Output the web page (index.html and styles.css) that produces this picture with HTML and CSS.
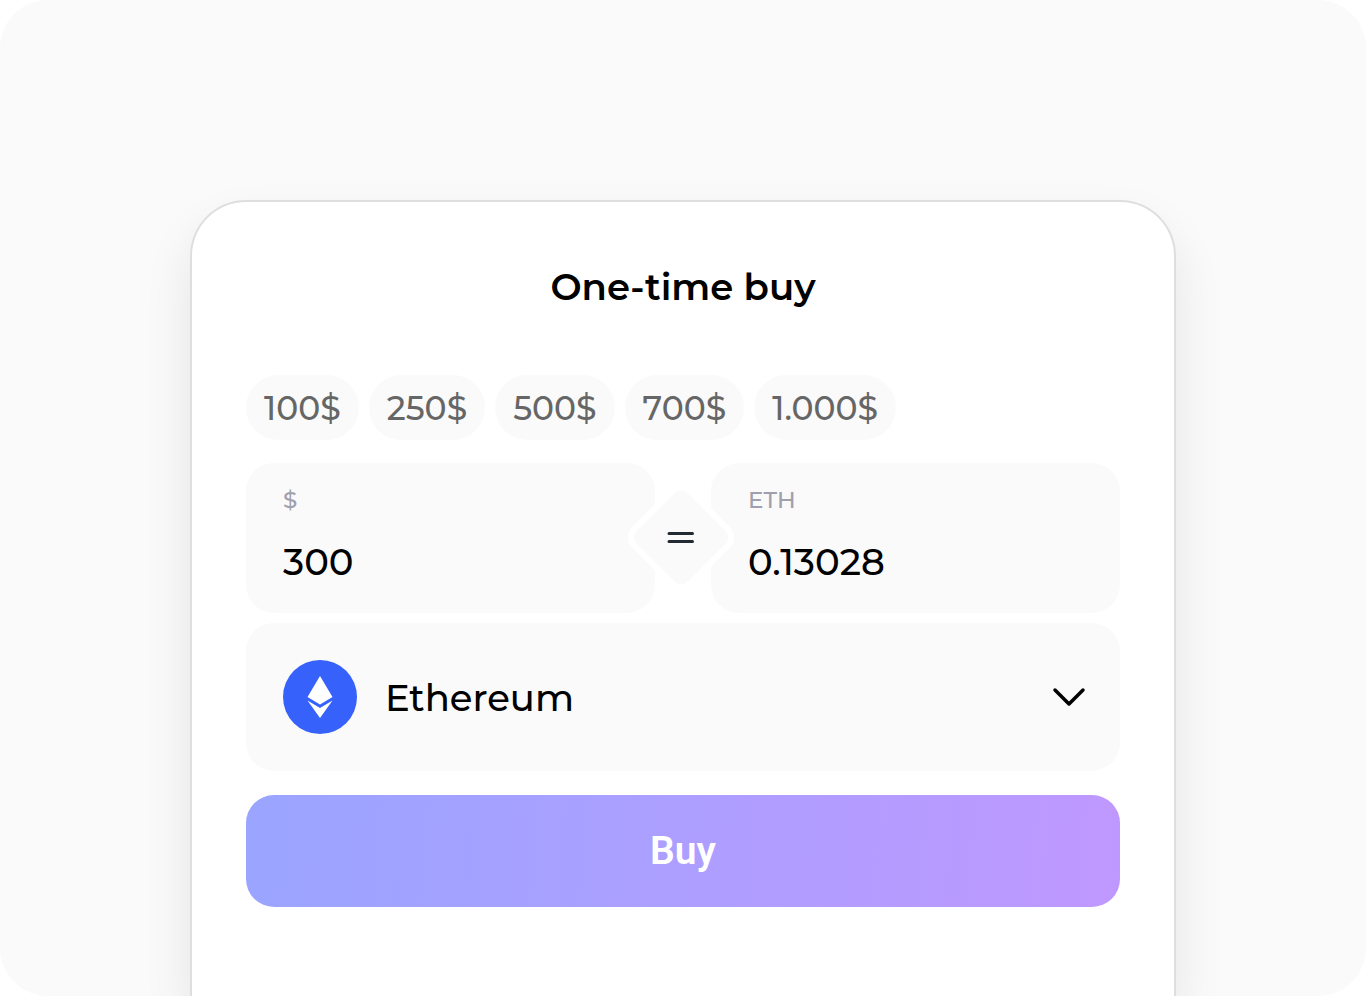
FILE: index.html
```html
<!DOCTYPE html>
<html lang="en">
<head>
    <meta charset="UTF-8">
    <meta name="viewport" content="width=device-width, initial-scale=1.0">
    <title>One-time buy</title>
    <link rel="stylesheet" href="styles.css">
</head>
<body>
    <main class="stage">
        <form class="card">
            <h1 class="title">One-time buy</h1>
            <div class="presets">
                <button type="button" class="preset">100$</button>
                <button type="button" class="preset">250$</button>
                <button type="button" class="preset">500$</button>
                <button type="button" class="preset">700$</button>
                <button type="button" class="preset">1.000$</button>
            </div>
            <div class="amounts">
                <div class="field">
                    <label for="usd">$</label>
                    <input type="text" id="usd" value="300">
                </div>
                <div class="field">
                    <label for="eth">ETH</label>
                    <input type="text" id="eth" value="0.13028">
                </div>
                <svg class="equals" viewBox="0 0 110 110" aria-hidden="true">
                    <rect x="14" y="15.5" width="78" height="78" rx="12" fill="#fafafa" stroke="#fff" stroke-width="6" transform="rotate(45 53 54.5)"/>
                    <path d="M41 50.5h23.500M41 58.500h23.500" stroke="#242a31" stroke-width="3" stroke-linecap="round"/>
                </svg>
            </div>
            <div class="coin">
                <svg class="coin-logo" viewBox="0 0 74 74" aria-hidden="true">
                    <circle cx="37" cy="37" r="37" fill="#3661fb"/>
                    <path d="M37 16l12.500 21L37 44.500 24.500 37z" fill="#fff"/>
                    <path d="M24.500 40.500L37 48l12.500-7.500L37 58z" fill="#fff"/>
                </svg>
                <select class="coin-select" aria-label="Coin">
                    <option>Ethereum</option>
                </select>
                <svg class="chevron" viewBox="0 0 34 20" aria-hidden="true">
                    <path d="M3 3l14 14L31 3" fill="none" stroke="#000" stroke-width="3.500" stroke-linecap="round" stroke-linejoin="round"/>
                </svg>
            </div>
            <button type="submit" class="buy">Buy</button>
        </form>
    </main>
</body>
</html>
```

FILE: styles.css
```css
* {
    box-sizing: border-box;
}
body {
    margin: 0;
    background: #fff;
    font-family: Montserrat, Inter, sans-serif;
    color: #000;
}
button, input, select {
    font-family: inherit;
    border: none;
    margin: 0;
}
.stage {
    display: flex;
    flex-direction: column;
    align-items: center;
    min-height: 100vh;
    padding: 200px 20px 0;
    background: #fafafa;
    border-radius: 48px;
    overflow: hidden;
}
.card {
    flex: 1;
    width: 100%;
    max-width: 986px;
    padding: 61px 54px;
    background: #fff;
    border: 2px solid #dedede;
    border-bottom: none;
    border-radius: 56px 56px 0 0;
    box-shadow: 0 26px 50px rgba(0, 0, 0, 0.09);
}
.title {
    margin: 0 0 64px;
    font-size: 37px;
    line-height: 48px;
    font-weight: 600;
    text-align: center;
}
.presets {
    display: flex;
    flex-wrap: wrap;
    gap: 10px;
    margin-bottom: 23px;
}
.preset {
    height: 65px;
    padding: 0 18px;
    border-radius: 33px;
    background: #fafafa;
    color: #666;
    font-size: 33px;
    font-weight: 500;
    cursor: pointer;
}
.amounts {
    position: relative;
    display: grid;
    grid-template-columns: 1fr 1fr;
    gap: 56px;
    margin-bottom: 10px;
}
.field {
    display: flex;
    flex-direction: column;
    gap: 16px;
    height: 150px;
    padding: 22px 37px;
    border-radius: 28px;
    background: #fafafa;
}
.field label {
    font-size: 23px;
    line-height: 30px;
    font-weight: 500;
    color: #a09fac;
}
.field input {
    width: 100%;
    height: 66px;
    padding: 0;
    background: transparent;
    color: #000;
    font-size: 37px;
    font-weight: 500;
}
/* sits over the gap between the two fields */
.equals {
    position: absolute;
    top: 50%;
    left: 50%;
    width: 110px;
    height: 110px;
    transform: translate(-50%, -50%);
}
.coin {
    display: flex;
    align-items: center;
    height: 148px;
    margin-bottom: 24px;
    padding: 0 34px 0 37px;
    border-radius: 28px;
    background: #fafafa;
}
.coin-logo {
    width: 74px;
    height: 74px;
}
.coin-select {
    flex: 1;
    min-width: 0;
    height: 74px;
    padding: 0 0 0 28px;
    appearance: none;
    background: transparent;
    color: #000;
    font-size: 37px;
    font-weight: 500;
}
.chevron {
    width: 34px;
    height: 20px;
    pointer-events: none;
}
.buy {
    width: 100%;
    height: 112px;
    border-radius: 28px;
    background: linear-gradient(95deg, #9aa5ff, #bf98ff);
    color: #fff;
    font-family: Roboto, sans-serif;
    font-size: 39px;
    font-weight: 600;
    cursor: pointer;
}
```
